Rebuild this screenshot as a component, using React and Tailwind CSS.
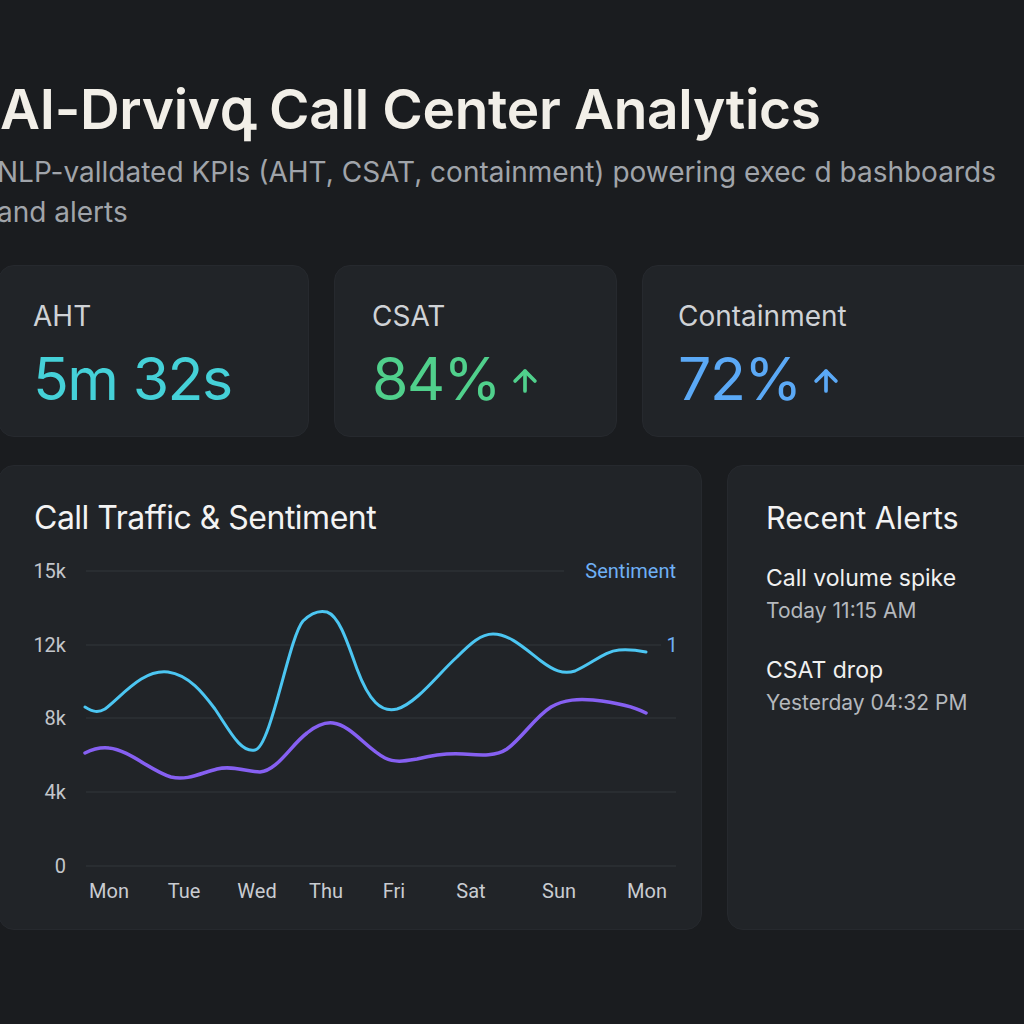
import { ArrowUp } from "lucide-react";

const days = [
  { label: "Mon", x: 108 },
  { label: "Tue", x: 183 },
  { label: "Wed", x: 256 },
  { label: "Thu", x: 325 },
  { label: "Fri", x: 393 },
  { label: "Sat", x: 470 },
  { label: "Sun", x: 558 },
  { label: "Mon", x: 646 },
];

const grid = [
  { label: "15k", y: 570 },
  { label: "12k", y: 644 },
  { label: "8k", y: 717 },
  { label: "4k", y: 791 },
  { label: "0", y: 865 },
];

// chart coordinates are page coordinates, shifted by the card's top (465)
const TOP = 465;
const traffic =
  "M84 706 C92 711 97 712 104 708 C122 694 142 668 167 671 C188 674 202 692 214 708 C230 732 240 752 254 749 C270 746 288 636 302 620 C310 612 318 609 326 611 C338 615 346 640 356 668 C368 700 380 712 396 708 C416 702 438 672 456 656 C470 642 480 633 492 633 C508 633 522 646 540 660 C552 669 562 674 574 670 C592 662 604 650 618 649 C630 648 640 650 645 651";
const sentiment =
  "M84 752 C92 748 100 746 108 747 C128 749 150 770 170 776 C186 780 200 772 216 768 C232 764 246 771 259 771 C276 770 290 744 306 732 C316 724 324 721 332 722 C350 724 366 748 384 757 C394 762 404 760 416 758 C432 754 446 752 462 753 C478 754 494 756 506 748 C522 736 534 716 550 706 C564 698 578 698 592 699 C610 701 630 704 645 712";

function StatCard({ label, value, color, arrow, className }) {
  return (
    <div
      className={`shrink-0 h-[172px] rounded-2xl bg-[#212428] border border-[#26292e] pt-[32px] ${className}`}
    >
      <div className="text-[28px] leading-[36px] text-[#cfd2d6]">{label}</div>
      <div className={`mt-[11px] flex items-center gap-[8px] ${color}`}>
        <span className="text-[59px] leading-[68px] tracking-[-1.5px]">{value}</span>
        {arrow && <ArrowUp size={34} strokeWidth={2.6} className="mt-[4px]" />}
      </div>
    </div>
  );
}

export default function App() {
  return (
    <div
      className="w-[1024px] h-[1024px] overflow-hidden bg-[#1a1c1f]"
      style={{ fontFamily: "Inter, 'Noto Sans', sans-serif" }}
    >
      <div className="pt-[76px] pl-0">
        <h1 className="text-[55px] leading-[66px] font-semibold text-[#f2efe8] tracking-[-0.3px]">
          AI-Drvivգ Call Center Analytics
        </h1>
        <p className="mt-[10px] text-[28px] leading-[40px] text-[#a0a4aa] -ml-[3px] whitespace-nowrap">
          NLP-valldated KPIs (AHT, CSAT, containment) powering exec d bashboards
          <br />
          and alerts
        </p>

        <div className="mt-[33px] flex gap-[25px] -ml-[2px]">
          <StatCard
            className="w-[311px] pl-[34px]"
            label="AHT"
            value="5m 32s"
            color="text-[#45d1d8]"
          />
          <StatCard
            className="w-[283px] pl-[37px]"
            label="CSAT"
            value="84%"
            color="text-[#50d08c]"
            arrow
          />
          <StatCard
            className="w-[420px] pl-[35px]"
            label="Containment"
            value="72%"
            color="text-[#5ba9f6]"
            arrow
          />
        </div>

        <div className="mt-[28px] flex gap-[25px] -ml-[2px]">
          <div className="shrink-0 w-[704px] h-[465px] rounded-2xl bg-[#212428] border border-[#26292e] relative">
            <div className="pt-[32px] pl-[35px] text-[32px] leading-[40px] tracking-[-0.5px] text-[#f3f3f3]">
              Call Traffic &amp; Sentiment
            </div>
            <svg
              className="absolute left-[2px] top-0"
              width="702"
              height="465"
              viewBox={`0 ${TOP} 702 465`}
              style={{ fontFamily: "Roboto, Inter, sans-serif" }}
            >
              {grid.map((g, i) => (
                <g key={g.label}>
                  <line
                    x1="85"
                    x2={i === 0 ? 563 : i === 1 ? 660 : 675}
                    y1={g.y}
                    y2={g.y}
                    stroke="#33363b"
                    strokeWidth="1.2"
                  />
                  <text
                    x="65"
                    y={g.y + 7}
                    textAnchor="end"
                    fontSize="20"
                    fill="#c3c6cb"
                  >
                    {g.label}
                  </text>
                </g>
              ))}
              <text x="675" y="577" textAnchor="end" fontSize="20" fill="#6fb0f5">
                Sentiment
              </text>
              <text x="671" y="651" textAnchor="middle" fontSize="20" fill="#6fb0f5">
                1
              </text>
              <path d={traffic} fill="none" stroke="#4cc6f2" strokeWidth="3" strokeLinecap="round" />
              <path d={sentiment} fill="none" stroke="#8660f2" strokeWidth="3.5" strokeLinecap="round" />
              {days.map((d, i) => (
                <text
                  key={i}
                  x={d.x}
                  y="897"
                  textAnchor="middle"
                  fontSize="20"
                  fill="#c9ccd1"
                >
                  {d.label}
                </text>
              ))}
            </svg>
          </div>

          <div className="shrink-0 w-[320px] h-[465px] rounded-2xl bg-[#212428] border border-[#26292e] pl-[38px] pt-[32px]">
            <div className="text-[30.5px] leading-[40px] text-[#f3f3f3]">Recent Alerts</div>
            <div className="mt-[24px] text-[23px] leading-[32px] text-[#f0f0f0]">Call volume spike</div>
            <div className="mt-[2px] text-[21px] leading-[30px] text-[#b4b8bd]">Today 11:15 AM</div>
            <div className="mt-[28px] text-[23px] leading-[32px] text-[#f0f0f0]">CSAT drop</div>
            <div className="mt-[2px] text-[21px] leading-[30px] text-[#b4b8bd]">Yesterday 04:32 PM</div>
          </div>
        </div>
      </div>
    </div>
  );
}
